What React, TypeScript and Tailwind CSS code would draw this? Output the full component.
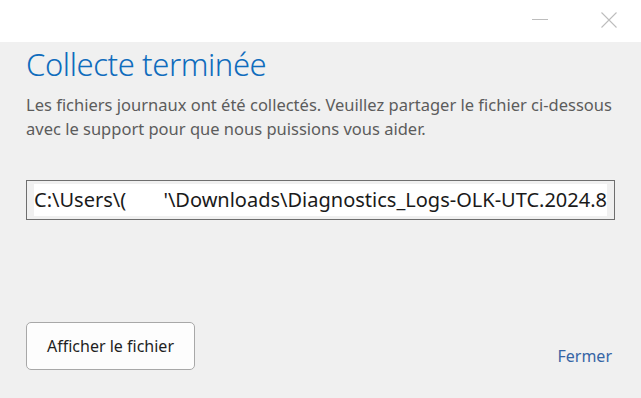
export default function App() {
  return (
    <div className="w-[641px] h-[398px] bg-[#f0f0f0] flex flex-col font-['Noto_Sans',sans-serif] overflow-hidden">
      {/* title bar */}
      <div className="h-[42px] bg-white flex items-start justify-end pr-[24px] shrink-0">
        <svg width="16" height="16" viewBox="0 0 16 16" className="mt-[12px]">
          <line x1="0" y1="7.5" x2="16" y2="7.5" stroke="#bdbdbd" strokeWidth="1" />
        </svg>
        <svg width="16" height="16" viewBox="0 0 16 16" className="mt-[12px] ml-[53px]">
          <path d="M0.5 0.5 L15.5 15.5 M15.5 0.5 L0.5 15.5" stroke="#bdbdbd" strokeWidth="1.1" />
        </svg>
      </div>

      <div className="flex-1 flex flex-col px-[26px]">
        <h1 className="mt-[2px] text-[31px] leading-[40px] tracking-[-0.4px] font-light text-[#0f6cbd]">
          Collecte terminée
        </h1>
        <p className="mt-[9px] text-[16.5px] leading-[24px] text-[#5c5c5c]">
          Les fichiers journaux ont été collectés. Veuillez partager le fichier ci-dessous
          <br />
          avec le support pour que nous puissions vous aider.
        </p>

        <div className="mt-[39px] h-[40px] border border-[#6e6e6e] flex items-center px-[7px]">
          <div className="h-[32px] flex-1 bg-white flex items-center justify-between whitespace-nowrap overflow-hidden text-[20px] text-[#1a1a1a]">
            <span>C:\Users\(</span>
            <span>'\Downloads\Diagnostics_Logs-OLK-UTC.2024.8</span>
          </div>
        </div>

        <div className="mt-auto mb-[28px] flex items-end justify-between">
          <button className="w-[169px] h-[48px] rounded-[5px] border border-[#a8a8a8] bg-[#fdfdfd] text-[16px] text-[#1f1f1f]">
            Afficher le fichier
          </button>
          <span className="mb-[2px] mr-[3px] text-[16px] leading-[24px] text-[#3565a5]">
            Fermer
          </span>
        </div>
      </div>
    </div>
  );
}
